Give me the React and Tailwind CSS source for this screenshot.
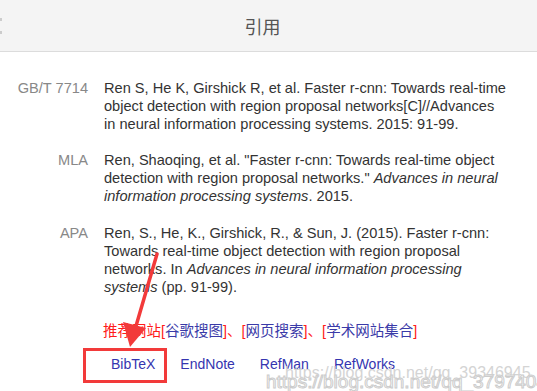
import React from "react";

const sans = { fontFamily: '"Liberation Sans", Arial, sans-serif' };

function Entry({ label, children, className = "" }) {
  return (
    <div className={"flex " + className}>
      <div className="w-[88px] shrink-0 text-right text-[#888]">{label}</div>
      <div className="ml-[16px] w-[430px] text-[#333] whitespace-nowrap">{children}</div>
    </div>
  );
}

export default function App() {
  return (
    <div
      className="relative w-[537px] h-[391px] overflow-hidden bg-white text-[14.6px] leading-[18px]"
      style={sans}
    >
      <div className="h-[52px] bg-[#f4f4f4] border-b border-[#dcdcdc] flex items-center justify-center">
        <span
          className="text-[18px] text-[#555] ml-[-12px]"
          style={{ fontFamily: '"Noto Sans CJK SC", sans-serif' }}
        >
          引用
        </span>
      </div>
      <div className="absolute left-0 top-[18px] w-[2px] h-[3px] bg-[#ccc]" />
      <div className="absolute left-0 top-[31px] w-[2px] h-[3px] bg-[#ccc]" />

      <div className="pt-[27px]">
        <Entry label="GB/T 7714">
          Ren S, He K, Girshick R, et al. Faster r-cnn: Towards real-time
          <br />
          object detection with region proposal networks[C]//Advances
          <br />
          in neural information processing systems. 2015: 91-99.
        </Entry>
        <Entry label="MLA" className="mt-[18px]">
          Ren, Shaoqing, et al. "Faster r-cnn: Towards real-time object
          <br />
          detection with region proposal networks." <i>Advances in neural</i>
          <br />
          <i>information processing systems</i>. 2015.
        </Entry>
        <Entry label="APA" className="mt-[19px]">
          Ren, S., He, K., Girshick, R., &amp; Sun, J. (2015). Faster r-cnn:
          <br />
          Towards real-time object detection with region proposal
          <br />
          networks. In <i>Advances in neural information processing</i>
          <br />
          <i>systems</i> (pp. 91-99).
        </Entry>

        <div
          className="mt-[26px] ml-[103px] text-[14.5px] leading-[18px] text-[#ff1a1a] whitespace-nowrap"
          style={{ fontFamily: '"Liberation Sans", "Noto Sans CJK SC", sans-serif' }}
        >
          推荐网站[<span className="text-[#3a3aa8]">谷歌搜图</span>]、[
          <span className="text-[#3a3aa8]">网页搜索</span>]、[
          <span className="text-[#3a3aa8]">学术网站集合</span>]
        </div>

        <div className="mt-[15px] ml-[111px] flex gap-[25px] text-[14px] text-[#3535b0]">
          <span>BibTeX</span>
          <span>EndNote</span>
          <span>RefMan</span>
          <span>RefWorks</span>
        </div>
      </div>

      {/* red highlight box */}
      <div className="absolute left-[83px] top-[348px] w-[84px] h-[35px] border-[3px] border-[#f23a3a]" />

      {/* arrow */}
      <svg className="absolute left-0 top-0" width="537" height="391" viewBox="0 0 537 391">
        <line x1="157" y1="254" x2="136" y2="326" stroke="#f23a3a" strokeWidth="3.5" strokeLinecap="round" />
        <polygon points="130,347 123,322 146,328" fill="#f23a3a" />
      </svg>

      {/* watermark */}
      <div
        className="absolute left-[285px] top-[364px] text-[16px] leading-[18px] text-[#d4d4d4] whitespace-nowrap"
        style={sans}
      >
        https://blog.csdn.net/qq_39346945
      </div>
      <div
        className="absolute left-[266px] top-[372px] text-[19px] leading-[20px] text-white/60 whitespace-nowrap [-webkit-text-stroke:1px_#cccccc]"
        style={sans}
      >
        https://blog.csdn.net/qq_37974048
      </div>
    </div>
  );
}
